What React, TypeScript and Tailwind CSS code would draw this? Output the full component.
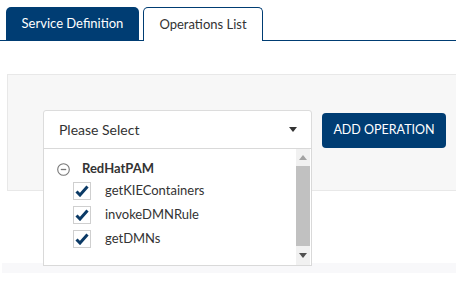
import React from "react";

const Check = () => (
  <div className="w-[18px] h-[18px] border border-[#cfcfcf] bg-white flex items-center justify-center shrink-0">
    <svg width="14" height="12" viewBox="0 0 14 12">
      <path d="M1.5 6.5 L5 10 L12.5 1.5" fill="none" stroke="#0b3a66" strokeWidth="3" strokeLinecap="butt" strokeLinejoin="miter" />
    </svg>
  </div>
);

export default function App() {
  const items = ["getKIEContainers", "invokeDMNRule", "getDMNs"];
  return (
    <div className="w-[456px] h-[284px] bg-white overflow-hidden relative" style={{ fontFamily: 'Lato, "Open Sans", sans-serif' }}>
      <div className="flex pl-[6px] pt-[7px] gap-[4px] border-b border-[#003d73] h-[41px]">
        <div className="w-[133px] h-[33px] bg-[#003d73] rounded-t-[5px] flex items-center justify-center text-white text-[13px] pt-[1px]">
          Service Definition
        </div>
        <div className="w-[120px] h-[34px] bg-white border border-b-0 border-[#003d73] rounded-t-[5px] flex items-center justify-center text-[#333] text-[13px]">
          Operations List
        </div>
      </div>
      <div className="mt-[33px] ml-[7px] h-[117px] bg-[#f7f7f7] border border-r-0 border-[#e8e8e8] pl-[35px] pt-[35px] flex items-start gap-[10px] relative">
        <div className="relative">
          <div className="w-[269px] h-[39px] bg-white border border-[#dcdcdc] rounded-t-[3px] flex items-center pl-[15px] pr-[14px] text-[14px] text-[#333]">
            <span className="flex-1">Please Select</span>
            <svg width="8" height="5" viewBox="0 0 8 5"><path d="M0 0 L8 0 L4 5 Z" fill="#333" /></svg>
          </div>
          <div className="absolute left-0 top-[38px] w-[269px] h-[118px] bg-white border border-[#d9d9d9] z-10 flex">
            <div className="flex-1 pl-[13px] pt-[12px]">
              <div className="flex items-center gap-[12px] h-[16px]">
                <svg width="13" height="13" viewBox="0 0 13 13">
                  <circle cx="6.5" cy="6.5" r="5.8" fill="none" stroke="#777" strokeWidth="1.1" />
                  <line x1="3.8" y1="6.5" x2="9.2" y2="6.5" stroke="#777" strokeWidth="1.3" />
                </svg>
                <span className="text-[13px] font-bold text-[#333]">RedHatPAM</span>
              </div>
              <div className="pl-[16px] mt-[5px] flex flex-col gap-[6px]">
                {items.map((t) => (
                  <div key={t} className="flex items-center gap-[14px] h-[18px]">
                    <Check />
                    <span className="text-[13px] text-[#333]">{t}</span>
                  </div>
                ))}
              </div>
            </div>
            <div className="w-[14px] mr-[1px] bg-[#f1f1f1] flex flex-col items-center">
              <div className="h-[17px] flex items-center justify-center">
                <svg width="8" height="5" viewBox="0 0 8 5"><path d="M0 5 L8 5 L4 0 Z" fill="#a3a3a3" /></svg>
              </div>
              <div className="w-[14px] h-[80px] bg-[#c1c1c1]" />
              <div className="flex-1 flex items-center justify-center">
                <svg width="8" height="5" viewBox="0 0 8 5"><path d="M0 0 L8 0 L4 5 Z" fill="#505050" /></svg>
              </div>
            </div>
          </div>
        </div>
        <div className="mt-[3px] w-[124px] h-[35px] bg-[#003d73] rounded-[4px] flex items-center justify-center text-white text-[12.5px]">
          ADD OPERATION
        </div>
      </div>
      <div className="mt-[72px] ml-[2px] h-[10px] bg-[#f8f8fa]" />
    </div>
  );
}
